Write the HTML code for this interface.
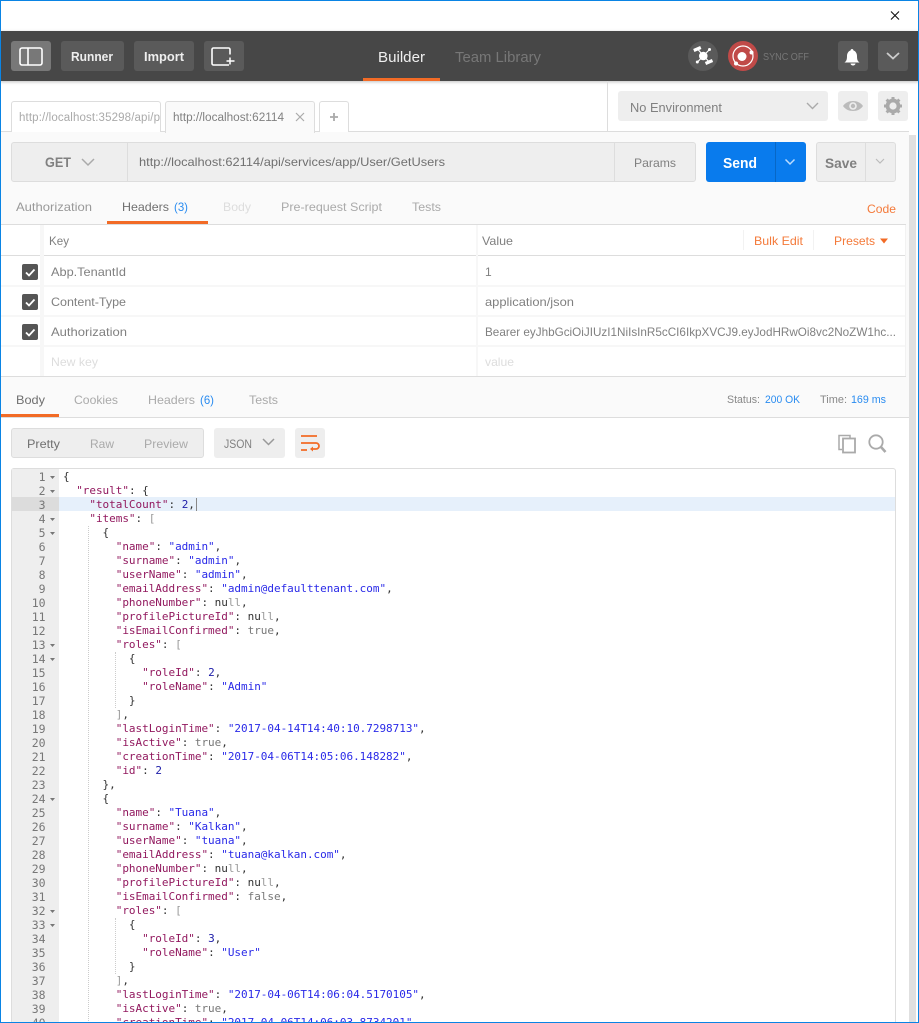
<!DOCTYPE html>
<html><head><meta charset="utf-8"><title>Postman</title>
<style>
html,body{margin:0;padding:0;background:#fff}
#w{position:relative;width:919px;height:1023px;overflow:hidden;background:#fff;font-family:"Liberation Sans",sans-serif}
.a{position:absolute;box-sizing:border-box}
svg{position:absolute;left:0;top:0}
text{font-family:"Liberation Sans",sans-serif;font-size:12px;fill:#808080}
pre{margin:0;position:absolute;font:11px/14px "DejaVu Sans Mono",monospace;letter-spacing:-.03px;color:#333;white-space:pre}
.k{color:#92195f}.s{color:#2a2ae8}.n{color:#1c1ca8}.l{color:#777}.f{color:#999}
#g{left:12px;width:33.5px;text-align:right;color:#777;top:470px;font-size:11.5px}
#c{left:63px;top:470px}
</style></head><body><div id="w">
<div class="a" style="left:0;top:31px;width:919px;height:50px;background:#474747;box-shadow:0 1px 3px rgba(0,0,0,.25)"></div>
<div class="a" style="left:363px;top:78px;width:77px;height:3px;background:#f26b26"></div>
<div class="a" style="left:11px;top:41px;width:40px;height:30px;background:#787878;border-radius:3px"></div>
<div class="a" style="left:61px;top:41px;width:63px;height:30px;background:#5a5a5a;border-radius:3px"></div>
<div class="a" style="left:134px;top:41px;width:60px;height:30px;background:#5a5a5a;border-radius:3px"></div>
<div class="a" style="left:204px;top:41px;width:40px;height:30px;background:#5a5a5a;border-radius:3px"></div>
<div class="a" style="left:838px;top:41px;width:30px;height:30px;background:#5a5a5a;border-radius:3px"></div>
<div class="a" style="left:878px;top:41px;width:30px;height:30px;background:#5a5a5a;border-radius:3px"></div>
<div class="a" style="left:688px;top:41px;width:30px;height:30px;background:#5a5a5a;border-radius:50%"></div>
<div class="a" style="left:728px;top:41px;width:30px;height:30px;background:#c04a48;border-radius:50%"></div>

<div class="a" style="left:1px;top:131px;width:908px;height:246px;background:#fafafa;border-top:1px solid #ddd"></div>
<div class="a" style="left:607px;top:81px;width:1px;height:50px;background:#ddd"></div>
<div class="a" style="left:11px;top:101px;width:150px;height:31px;background:#fff;border:1px solid #ddd;border-bottom:0;border-radius:3px 3px 0 0"></div>
<div class="a" style="left:165px;top:101px;width:150px;height:32px;background:#fafafa;border:1px solid #ddd;border-bottom:0;border-radius:3px 3px 0 0"></div>
<div class="a" style="left:319px;top:101px;width:30px;height:31px;background:#fff;border:1px solid #ddd;border-bottom:0;border-radius:3px 3px 0 0"></div>
<div class="a" style="left:618px;top:91px;width:210px;height:30px;background:#eee;border-radius:3px"></div>
<div class="a" style="left:838px;top:91px;width:30px;height:30px;background:#eee;border-radius:3px"></div>
<div class="a" style="left:878px;top:91px;width:30px;height:30px;background:#eee;border-radius:3px"></div>

<div class="a" style="left:11px;top:142px;width:685px;height:40px;background:#eee;border:1px solid #ddd;border-radius:3px"></div>
<div class="a" style="left:127px;top:142px;width:1px;height:40px;background:#ddd"></div>
<div class="a" style="left:614px;top:142px;width:1px;height:40px;background:#ddd"></div>
<div class="a" style="left:706px;top:142px;width:100px;height:40px;background:#097bed;border-radius:3px"></div>
<div class="a" style="left:775px;top:142px;width:1px;height:40px;background:#0767c6"></div>
<div class="a" style="left:816px;top:142px;width:80px;height:40px;background:#eee;border:1px solid #ddd;border-radius:3px"></div>
<div class="a" style="left:865px;top:142px;width:1px;height:40px;background:#ddd"></div>
<div class="a" style="left:909px;top:135px;width:7px;height:887px;background:#e0e0e0"></div>

<div class="a" style="left:107px;top:221px;width:101px;height:3px;background:#f26b26"></div>
<div class="a" style="left:1px;top:224px;width:905px;height:153px;background:#fff;border-top:1px solid #ddd;border-bottom:1px solid #ddd"></div>
<div class="a" style="left:1px;top:255px;width:905px;height:1px;background:#ddd"></div>
<div class="a" style="left:1px;top:285px;width:905px;height:2px;background:#f7f7f7"></div>
<div class="a" style="left:1px;top:315px;width:905px;height:2px;background:#f7f7f7"></div>
<div class="a" style="left:1px;top:345px;width:905px;height:2px;background:#f7f7f7"></div>
<div class="a" style="left:40px;top:225px;width:4px;height:151px;background:#f7f7f7"></div>
<div class="a" style="left:476px;top:225px;width:2px;height:151px;background:#f7f7f7"></div>
<div class="a" style="left:743px;top:230px;width:1px;height:20px;background:#f2f2f2"></div>
<div class="a" style="left:813px;top:230px;width:1px;height:20px;background:#f2f2f2"></div>
<div class="a" style="left:905px;top:225px;width:1px;height:151px;background:#f2f2f2"></div>

<div class="a" style="left:22px;top:264px;width:16px;height:16px;background:#555;border-radius:2px"></div>
<div class="a" style="left:22px;top:294px;width:16px;height:16px;background:#555;border-radius:2px"></div>
<div class="a" style="left:22px;top:324px;width:16px;height:16px;background:#555;border-radius:2px"></div>

<div class="a" style="left:1px;top:377px;width:908px;height:41px;background:#fafafa;border-bottom:1px solid #ddd"></div>
<div class="a" style="left:1px;top:414px;width:58px;height:3px;background:#f26b26"></div>
<div class="a" style="left:11px;top:428px;width:193px;height:30px;background:#eee;border:1px solid #ddd;border-radius:3px"></div>
<div class="a" style="left:214px;top:428px;width:71px;height:30px;background:#eee;border-radius:3px"></div>
<div class="a" style="left:295px;top:428px;width:30px;height:30px;background:#eee;border-radius:3px"></div>

<div class="a" style="left:11px;top:468px;width:885px;height:560px;background:#fff;border:1px solid #ddd;border-radius:3px"></div>
<div class="a" style="left:12px;top:469px;width:47px;height:554px;background:#eee"></div>
<div class="a" style="left:12px;top:497px;width:47px;height:14px;background:#dcdcdc"></div>
<div class="a" style="left:59px;top:497px;width:836px;height:14px;background:#e6f0fb"></div>
<div class="a" style="left:88px;top:526px;width:0;height:497px;border-left:1px dotted #ccc"></div>
<div class="a" style="left:115px;top:652px;width:0;height:56px;border-left:1px dotted #ccc"></div>
<div class="a" style="left:115px;top:918px;width:0;height:56px;border-left:1px dotted #ccc"></div>
<div class="a" style="left:196px;top:498px;width:1px;height:13px;background:#888"></div>

<pre id="g">1
2
3
4
5
6
7
8
9
10
11
12
13
14
15
16
17
18
19
20
21
22
23
24
25
26
27
28
29
30
31
32
33
34
35
36
37
38
39
40</pre>
<pre id="c">{
  <span class="k">"result"</span>: {
    <span class="k">"totalCount"</span>: <span class="n">2</span>,
    <span class="k">"items"</span>: <span class="f">[</span>
      {
        <span class="k">"name"</span>: <span class="s">"admin"</span>,
        <span class="k">"surname"</span>: <span class="s">"admin"</span>,
        <span class="k">"userName"</span>: <span class="s">"admin"</span>,
        <span class="k">"emailAddress"</span>: <span class="s">"admin@defaulttenant.com"</span>,
        <span class="k">"phoneNumber"</span>: nu<span class="f">ll</span>,
        <span class="k">"profilePictureId"</span>: nu<span class="f">ll</span>,
        <span class="k">"isEmailConfirmed"</span>: <span class="l">true</span>,
        <span class="k">"roles"</span>: <span class="f">[</span>
          {
            <span class="k">"roleId"</span>: <span class="n">2</span>,
            <span class="k">"roleName"</span>: <span class="s">"Admin"</span>
          }
        <span class="f">]</span>,
        <span class="k">"lastLoginTime"</span>: <span class="s">"2017-04-14T14:40:10.7298713"</span>,
        <span class="k">"isActive"</span>: <span class="l">true</span>,
        <span class="k">"creationTime"</span>: <span class="s">"2017-04-06T14:05:06.148282"</span>,
        <span class="k">"id"</span>: <span class="n">2</span>
      },
      {
        <span class="k">"name"</span>: <span class="s">"Tuana"</span>,
        <span class="k">"surname"</span>: <span class="s">"Kalkan"</span>,
        <span class="k">"userName"</span>: <span class="s">"tuana"</span>,
        <span class="k">"emailAddress"</span>: <span class="s">"tuana@kalkan.com"</span>,
        <span class="k">"phoneNumber"</span>: nu<span class="f">ll</span>,
        <span class="k">"profilePictureId"</span>: nu<span class="f">ll</span>,
        <span class="k">"isEmailConfirmed"</span>: <span class="l">false</span>,
        <span class="k">"roles"</span>: <span class="f">[</span>
          {
            <span class="k">"roleId"</span>: <span class="n">3</span>,
            <span class="k">"roleName"</span>: <span class="s">"User"</span>
          }
        <span class="f">]</span>,
        <span class="k">"lastLoginTime"</span>: <span class="s">"2017-04-06T14:06:04.5170105"</span>,
        <span class="k">"isActive"</span>: <span class="l">true</span>,
        <span class="k">"creationTime"</span>: <span class="s">"2017-04-06T14:06:03.8734201"</span>,</pre>

<svg width="919" height="1023" viewBox="0 0 919 1023">
<!-- close -->
<path d="M891 11.500l8 8M899 11.500l-8 8" stroke="#111" stroke-width="1.100" fill="none"/>
<!-- sidebar icon -->
<rect x="20" y="48" width="22" height="17" rx="2" fill="none" stroke="#fff" stroke-width="1.600"/><path d="M28 48v17" stroke="#fff" stroke-width="1.600"/>
<text x="71" y="61" textLength="42" lengthAdjust="spacingAndGlyphs" style="fill:#eee;font-size:12.500px;font-weight:bold">Runner</text>
<text x="144" y="61" textLength="40" lengthAdjust="spacingAndGlyphs" style="fill:#eee;font-size:12.500px;font-weight:bold">Import</text>
<!-- new tab icon -->
<path d="M229 65h-15.500a1.500 1.500 0 0 1-1.500-1.500v-14a1.500 1.500 0 0 1 1.500-1.500h15a1.500 1.500 0 0 1 1.500 1.500v5" fill="none" stroke="#fff" stroke-width="1.600"/><path d="M230 57.500v7M226.500 61h8" stroke="#fff" stroke-width="1.500"/>
<text x="378" y="62" textLength="47" lengthAdjust="spacingAndGlyphs" style="fill:#f0f0f0;font-size:15px">Builder</text>
<text x="455" y="62" textLength="86" lengthAdjust="spacingAndGlyphs" style="fill:#777;font-size:15px">Team Library</text>
<!-- satellite -->
<path d="M693.800 50.500l7-3M705.500 63.500l7-3" stroke="#fff" stroke-width="3.200" fill="none"/>
<path d="M697.500 49l12.500 14M709.500 49.500l-12 12.500" stroke="#fff" stroke-width="1.200" fill="none"/>
<circle cx="703.300" cy="56" r="4.300" fill="#fff"/><circle cx="709.500" cy="49.500" r="1.500" fill="#fff"/><circle cx="697.300" cy="62" r="1.500" fill="#fff"/>
<!-- sync -->
<circle cx="743" cy="56" r="10" fill="none" stroke="#fff" stroke-width="1.200"/><circle cx="742" cy="56.500" r="4.500" fill="#fff"/><circle cx="751.500" cy="52.500" r="2" fill="#fff"/><circle cx="736" cy="63.500" r="2" fill="#fff"/>
<text x="763" y="60" textLength="46" lengthAdjust="spacingAndGlyphs" style="fill:#777;font-size:10.500px">SYNC OFF</text>
<!-- bell -->
<path d="M845 62.500c2-1.500 2.500-3 2.500-6.500 0-3 1.700-5 3.500-5.500.2-1 .7-1.500 1.500-1.500s1.300.5 1.500 1.500c1.800.5 3.500 2.500 3.500 5.500 0 3.500.5 5 2.500 6.500z" fill="#fff" transform="translate(-.500 0)"/><path d="M850.500 63.500a2.500 2 0 0 0 5 0z" fill="#fff"/>
<path d="M887 53l6 5.500 6-5.500" stroke="#ccc" stroke-width="1.800" fill="none"/>

<!-- tabs -->
<text x="19" y="121" textLength="141" lengthAdjust="spacing" style="fill:#aaa;font-size:11.500px">http://localhost:35298/api/p</text>
<text x="173" y="121" textLength="111" lengthAdjust="spacingAndGlyphs" style="fill:#808080;font-size:11.500px">http://localhost:62114</text>
<path d="M296 113l8 8M304 113l-8 8" stroke="#aaa" stroke-width="1.200" fill="none"/>
<path d="M330 117h8M334 113v8" stroke="#aaa" stroke-width="1.800" fill="none"/>
<text x="630" y="112" textLength="92" lengthAdjust="spacingAndGlyphs" style="fill:#808080;font-size:12.500px">No Environment</text>
<path d="M807 103l5.500 5.500 5.500-5.500" stroke="#aaa" stroke-width="1.400" fill="none"/>
<!-- eye -->
<path d="M843 106c2.500-3.500 6-5 10-5s7.500 1.500 10 5c-2.500 3.500-6 5-10 5s-7.500-1.500-10-5z" fill="#bbb"/><circle cx="853" cy="106" r="3.800" fill="#eee"/><circle cx="853" cy="106" r="2.200" fill="#bbb"/>
<!-- gear -->
<circle cx="893" cy="106" r="5.700" fill="none" stroke="#aaa" stroke-width="3.300"/><path d="M893 97v18M884 106h18M886.600 99.600l12.800 12.800M899.400 99.600l-12.800 12.800" stroke="#aaa" stroke-width="3"/><circle cx="893" cy="106" r="3.600" fill="#eee"/>

<!-- request -->
<text x="45" y="167" textLength="26" lengthAdjust="spacingAndGlyphs" style="fill:#808080;font-size:13.500px;font-weight:bold">GET</text>
<path d="M82 159l6 6 6-6" stroke="#aaa" stroke-width="1.500" fill="none"/>
<text x="139" y="166" textLength="306" lengthAdjust="spacingAndGlyphs" style="fill:#707070;font-size:12px">http://localhost:62114/api/services/app/User/GetUsers</text>
<text x="634" y="167" textLength="42" lengthAdjust="spacingAndGlyphs" style="fill:#808080;font-size:12px">Params</text>
<text x="723" y="168" textLength="34" lengthAdjust="spacingAndGlyphs" style="fill:#fff;font-size:14.500px;font-weight:bold">Send</text>
<path d="M785.500 159.500l4.500 4.500 4.500-4.500" stroke="#bcdcff" stroke-width="1.500" fill="none"/>
<text x="825" y="168" textLength="32" lengthAdjust="spacingAndGlyphs" style="fill:#808080;font-size:14px;font-weight:bold">Save</text>
<path d="M876 159l4 4 4-4" stroke="#bbb" stroke-width="1.200" fill="none"/>

<text x="16" y="211" textLength="76" lengthAdjust="spacingAndGlyphs" style="fill:#999">Authorization</text>
<text x="122" y="211" textLength="47" lengthAdjust="spacingAndGlyphs" style="fill:#707070">Headers</text>
<text x="174" y="211" textLength="14" lengthAdjust="spacingAndGlyphs" style="fill:#2a8cf0">(3)</text>
<text x="223" y="211" textLength="28" lengthAdjust="spacingAndGlyphs" style="fill:#ddd">Body</text>
<text x="281" y="211" textLength="101" lengthAdjust="spacingAndGlyphs" style="fill:#aaa">Pre-request Script</text>
<text x="412" y="211" textLength="29" lengthAdjust="spacingAndGlyphs" style="fill:#aaa">Tests</text>
<text x="867" y="213" textLength="29" lengthAdjust="spacingAndGlyphs" style="fill:#f47a3a">Code</text>

<text x="49" y="245" textLength="20" lengthAdjust="spacingAndGlyphs">Key</text>
<text x="482" y="245" textLength="31" lengthAdjust="spacingAndGlyphs">Value</text>
<text x="754" y="245" textLength="49" lengthAdjust="spacingAndGlyphs" style="fill:#f47a3a">Bulk Edit</text>
<text x="834" y="245" textLength="41" lengthAdjust="spacingAndGlyphs" style="fill:#f47a3a">Presets</text>
<path d="M880 238.500h8l-4 5z" fill="#f26b26"/>

<path d="M26 272.500l3 3 5.500-6M26 302.500l3 3 5.500-6M26 332.500l3 3 5.500-6" stroke="#fff" stroke-width="1.800" fill="none"/>
<text x="51" y="276" textLength="75" lengthAdjust="spacingAndGlyphs">Abp.TenantId</text>
<text x="51" y="306" textLength="75" lengthAdjust="spacingAndGlyphs">Content-Type</text>
<text x="51" y="336" textLength="76" lengthAdjust="spacingAndGlyphs">Authorization</text>
<text x="51" y="366" textLength="47" lengthAdjust="spacingAndGlyphs" style="fill:#ddd">New key</text>
<text x="485" y="276" style="fill:#808080">1</text>
<text x="485" y="306" textLength="89" lengthAdjust="spacingAndGlyphs">application/json</text>
<text x="485" y="336" textLength="411" lengthAdjust="spacingAndGlyphs">Bearer eyJhbGciOiJIUzI1NiIsInR5cCI6IkpXVCJ9.eyJodHRwOi8vc2NoZW1hc...</text>
<text x="485" y="366" textLength="29" lengthAdjust="spacingAndGlyphs" style="fill:#ddd">value</text>

<text x="16" y="404" textLength="29" lengthAdjust="spacingAndGlyphs" style="fill:#707070">Body</text>
<text x="74" y="404" textLength="44" lengthAdjust="spacingAndGlyphs" style="fill:#aaa">Cookies</text>
<text x="148" y="404" textLength="47" lengthAdjust="spacingAndGlyphs" style="fill:#aaa">Headers</text>
<text x="200" y="404" textLength="14" lengthAdjust="spacingAndGlyphs" style="fill:#2a8cf0">(6)</text>
<text x="249" y="404" textLength="29" lengthAdjust="spacingAndGlyphs" style="fill:#aaa">Tests</text>
<text x="727" y="403" textLength="33" lengthAdjust="spacingAndGlyphs" style="font-size:11px;fill:#888">Status:</text>
<text x="765" y="403" textLength="35" lengthAdjust="spacingAndGlyphs" style="font-size:11px;fill:#2a8cf0">200 OK</text>
<text x="820" y="403" textLength="27" lengthAdjust="spacingAndGlyphs" style="font-size:11px;fill:#888">Time:</text>
<text x="851" y="403" textLength="35" lengthAdjust="spacingAndGlyphs" style="font-size:11px;fill:#2a8cf0">169 ms</text>

<text x="27" y="448" textLength="33" lengthAdjust="spacingAndGlyphs" style="fill:#707070">Pretty</text>
<text x="90" y="448" textLength="24" lengthAdjust="spacingAndGlyphs" style="fill:#aaa">Raw</text>
<text x="144" y="448" textLength="44" lengthAdjust="spacingAndGlyphs" style="fill:#aaa">Preview</text>
<text x="224" y="448" textLength="28" lengthAdjust="spacingAndGlyphs" style="fill:#808080">JSON</text>
<path d="M263 439l5.500 5.500 5.500-5.500" stroke="#999" stroke-width="1.500" fill="none"/>
<path d="M301 436h16M301 443h15a3 3 0 0 1 0 6h-5M301 450h6" stroke="#f26b26" stroke-width="1.800" fill="none"/><path d="M313 446.500l-3 2.500 3 2.500z" fill="#f26b26"/>
<path d="M842 449.500h-3v-14h11v3" fill="none" stroke="#aaa" stroke-width="1.500"/><rect x="843" y="438.500" width="12" height="14" fill="none" stroke="#aaa" stroke-width="1.800"/>
<circle cx="876" cy="442" r="6.700" fill="none" stroke="#aaa" stroke-width="1.800"/><path d="M881 447l4.500 5" stroke="#aaa" stroke-width="2.600"/>
<!-- fold arrows -->
<path fill="#777" d="M50 476h5l-2.500 3zM50 490h5l-2.500 3zM50 518h5l-2.500 3zM50 532h5l-2.500 3zM50 644h5l-2.500 3zM50 658h5l-2.500 3zM50 798h5l-2.500 3zM50 910h5l-2.500 3zM50 924h5l-2.500 3z"/>
</svg>

<div class="a" style="left:0;top:0;width:919px;height:1023px;border:1px solid #0a84e4;pointer-events:none"></div>
</div></body></html>
